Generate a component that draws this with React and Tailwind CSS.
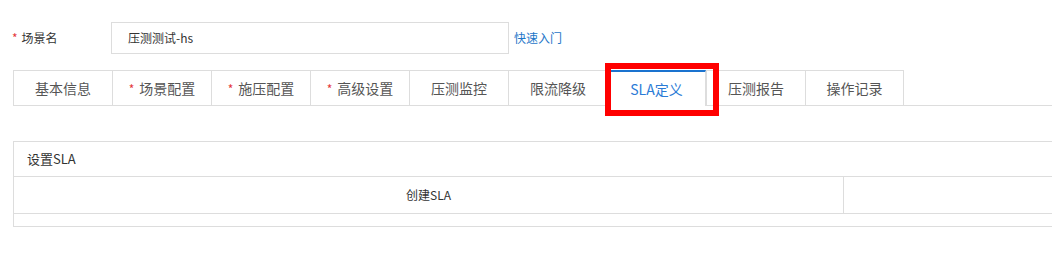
import React from 'react';

const tabs = [
  { label: '基本信息' },
  { label: '场景配置', required: true },
  { label: '施压配置', required: true },
  { label: '高级设置', required: true },
  { label: '压测监控' },
  { label: '限流降级' },
  { label: 'SLA定义', active: true },
  { label: '压测报告' },
  { label: '操作记录' },
];

export default function App() {
  return (
    <div
      className="relative w-[1052px] h-[260px] overflow-hidden bg-white text-[#333]"
      style={{ fontFamily: '"Noto Sans CJK SC", "Noto Sans", sans-serif' }}
    >
      {/* page title, scrolled mostly out of view */}
      <div className="h-[22px]">
        <div className="h-[2px] overflow-hidden flex flex-col justify-end">
          <h2 className="shrink-0 pl-[58px] text-[18px] leading-[24px] text-[#999]">编辑压测场景</h2>
        </div>
      </div>

      {/* scene name */}
      <div className="flex items-center h-[32px]">
        <label className="w-[111px] pl-[12px] text-[12px]">
          <span className="text-[#e4393c] mr-[4px]">*</span>场景名
        </label>
        <div className="w-[398px] h-[32px] border border-[#ddd] flex items-center pl-[16px] text-[12px] text-[#333]">
          压测测试-hs
        </div>
        <a className="ml-[5px] text-[12px] text-[#1e76c8] cursor-pointer">快速入门</a>
      </div>

      {/* tabs */}
      <div className="mt-[16px] ml-[13px] flex border-b border-[#ddd] h-[36px]">
        {tabs.map((t, i) => (
          <div
            key={t.label}
            className={
              'w-[99px] h-[36px] flex items-center justify-center text-[14px] border-l border-[#ddd] ' +
              (t.active
                ? 'border-t-2 border-t-[#1a73cf] border-r bg-white text-[#2b7bd6] -mb-px'
                : 'border-t text-[#555]') +
              (i === tabs.length - 1 ? ' border-r' : '')
            }
          >
            {t.required && <span className="text-[#e4393c] mr-[5px] text-[12px]">*</span>}
            {t.label}
          </div>
        ))}
      </div>

      {/* SLA panel */}
      <div className="mt-[35px] ml-[13px] w-[1060px] border border-[#ddd] text-[13px]">
        <div className="h-[35px] flex items-center pl-[13px] border-b border-[#ddd] text-[13px] text-[#333]">
          设置SLA
        </div>
        <div className="flex h-[37px] border-b border-[#ddd]">
          <div className="w-[830px] flex items-center justify-center border-r border-[#ddd] text-[12px] text-[#333]">
            创建SLA
          </div>
          <div className="flex-1" />
        </div>
        <div className="h-[12px]" />
      </div>

      {/* annotation highlight */}
      <div className="absolute left-[605px] top-[63px] w-[114px] h-[53px] border-[6px] border-[#ff0000]" />
    </div>
  );
}
